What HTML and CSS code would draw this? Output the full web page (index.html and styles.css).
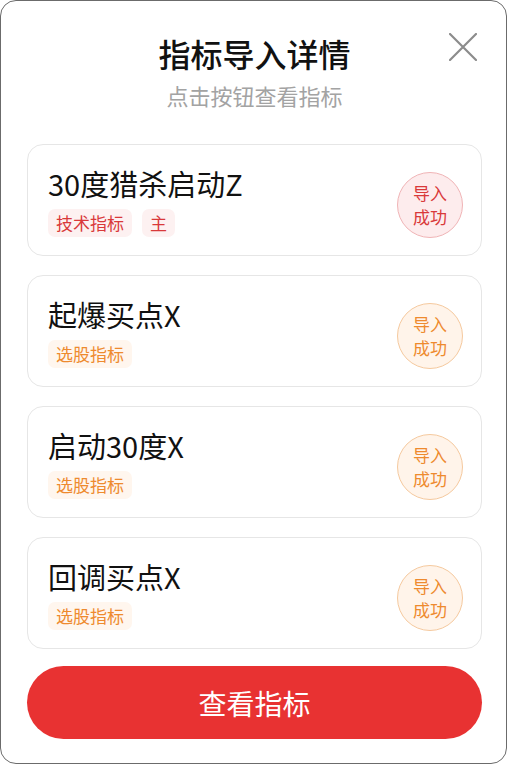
FILE: index.html
```html
<!DOCTYPE html>
<html lang="zh-CN">
<head>
    <meta charset="UTF-8">
    <meta name="viewport" content="width=device-width, initial-scale=1.0">
    <title>指标导入详情</title>
    <link rel="stylesheet" href="styles.css">
</head>
<body>
    <div class="modal">
        <!-- 标题 -->
        <div class="header">
            <h1>指标导入详情</h1>
            <p class="subtitle">点击按钮查看指标</p>
            <button class="close" aria-label="关闭">
                <svg width="28" height="28" viewBox="0 0 28 28">
                    <path d="M1 1 L27 27 M27 1 L1 27" stroke="#8c8c8c" stroke-width="2.2" stroke-linecap="round" fill="none"/>
                </svg>
            </button>
        </div>

        <!-- 列表 -->
        <div class="list">
            <div class="card">
                <div class="info">
                    <div class="name">30度猎杀启动Z</div>
                    <div class="tags">
                        <span class="tag red">技术指标</span>
                        <span class="tag red">主</span>
                    </div>
                </div>
                <div class="badge red">导入<br>成功</div>
            </div>
            <div class="card">
                <div class="info">
                    <div class="name">起爆买点X</div>
                    <div class="tags">
                        <span class="tag orange">选股指标</span>
                    </div>
                </div>
                <div class="badge orange">导入<br>成功</div>
            </div>
            <div class="card">
                <div class="info">
                    <div class="name">启动30度X</div>
                    <div class="tags">
                        <span class="tag orange">选股指标</span>
                    </div>
                </div>
                <div class="badge orange">导入<br>成功</div>
            </div>
            <div class="card">
                <div class="info">
                    <div class="name">回调买点X</div>
                    <div class="tags">
                        <span class="tag orange">选股指标</span>
                    </div>
                </div>
                <div class="badge orange">导入<br>成功</div>
            </div>
        </div>

        <!-- 按钮 -->
        <button class="primary">查看指标</button>
    </div>
</body>
</html>
```

FILE: styles.css
```css
body {
    font-family: "Noto Sans CJK SC", "Noto Sans", sans-serif;
    margin: 0;
    padding: 0;
    background: #fff;
    color: #111;
}

.modal {
    box-sizing: border-box;
    width: 507px;
    height: 764px;
    border: 1px solid #6b6b6b;
    border-radius: 16px;
    background: #fff;
    padding: 0 24px 0 26px;
}

.header {
    position: relative;
    text-align: center;
    padding-top: 30px;
    margin-bottom: 34px;
}

h1 {
    margin: 0;
    font-size: 32px;
    line-height: 44px;
    font-weight: 500;
    color: #111;
}

.subtitle {
    margin: 5px 0 0;
    font-size: 22px;
    line-height: 30px;
    color: #a3a3a3;
}

.close {
    position: absolute;
    top: 32px;
    right: 5px;
    width: 28px;
    height: 28px;
    padding: 0;
    border: none;
    background: none;
    cursor: pointer;
}

.list {
    display: flex;
    flex-direction: column;
    gap: 19px;
}

.card {
    display: flex;
    justify-content: space-between;
    border: 1px solid #e6e6e6;
    border-radius: 16px;
    padding: 18px 18px 18px 20px;
}

.name {
    font-size: 29px;
    line-height: 40px;
}

.tags {
    display: flex;
    gap: 10px;
    margin-top: 6px;
}

.tag {
    font-size: 17px;
    line-height: 28px;
    padding: 0 8px;
    border-radius: 7px;
}

.tag.red {
    background: #fdf1f1;
    color: #d9393a;
}

.tag.orange {
    background: #fff6ee;
    color: #ee8a2e;
}

.badge {
    align-self: center;
    margin: 5px 0 -5px;
    box-sizing: border-box;
    width: 66px;
    height: 66px;
    border-radius: 50%;
    display: flex;
    align-items: center;
    justify-content: center;
    text-align: center;
    font-size: 17px;
    line-height: 24px;
}

.badge.red {
    background: #fdeced;
    border: 1px solid #f0b4b6;
    color: #d9393a;
}

.badge.orange {
    background: #fff4ea;
    border: 1px solid #f5c99e;
    color: #ee8a2e;
}

.primary {
    display: block;
    width: 100%;
    height: 73px;
    margin-top: 17px;
    border: none;
    border-radius: 37px;
    background: #e83232;
    color: #fff;
    font-family: inherit;
    font-size: 28px;
    cursor: pointer;
}
```
